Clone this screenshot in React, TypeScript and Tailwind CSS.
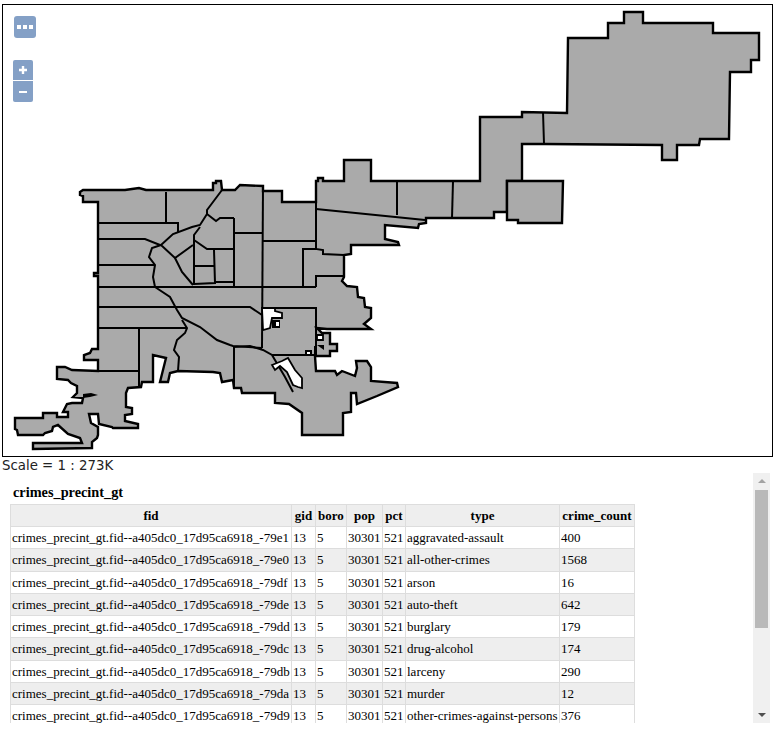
const outline =
  "80,192 83,190 125,190 132,189 139,188 146,190 213,190 213,183 216,183 216,181 221,181 222,190 235,190 240,185 263,186 263,191 282,191 282,202 316,202 316,181 318,181 318,178 323,178 323,181 344,181 344,160 371,160 371,181 480,181 480,117 513,117 522,117 522,112 567,113 568,38 608,38 608,23 624,23 624,12 643,12 643,23 713,23 713,33 759,33 759,60 751,60 751,72 730,72 729,139 700,139 699,145 677,145 677,160 662,160 662,145 545,144 522,144 522,181 507,181 507,212 494,212 494,218 426,218 426,223 419,224 418,228 385,225 385,239 398,242 399,245 351,245 351,254 344,255 344,277 342,281 347,286 357,287 358,297 364,298 365,307 371,308 371,318 364,324 371,329 356,329 327,329 317,328 322,333 330,333 330,344 337,344 337,351 330,351 330,356 315,356 316,371 335,371 337,375 342,371 355,376 357,368 356,361 367,361 371,367 371,381 397,383 398,387 377,396 357,404 356,393 351,393 351,412 343,413 343,435 302,435 302,413 289,404 275,403 275,393 242,393 241,388 234,388 233,380 222,382 220,373 213,372 178,371 170,373 168,382 160,382 166,358 153,355 153,382 142,382 141,387 128,388 126,393 126,407 132,408 132,414 125,415 125,421 138,424 138,428 113,428 112,427 99,424 98,414 89,414 91,423 98,427 98,435 97,438 92,442 92,448 33,449 33,443 82,443 80,438 68,434 58,425 53,427 52,431 45,433 43,435 18,435 17,430 15,429 15,418 43,418 43,413 57,413 57,417 68,417 68,412 63,412 67,404 72,403 82,403 83,398 73,397 77,393 77,386 71,383 68,380 57,379 57,367 65,367 72,370 98,371 98,360 84,360 84,355 90,353 92,349 98,349 98,276 94,276 94,273 98,273 98,202 83,202 83,196 80,195";

const eastBlock = "507,181 563,181 562,223 518,223 518,220 507,220";

const holes = [
  "262,308 275,308 275,311 282,313 282,318 272,318 270,328 263,330",
  "272,365 282,361 288,358 295,370 302,378 302,388 298,387 293,385 287,372 280,366 275,370",
  "317,335 323,335 323,340 317,340",
];

const slivers = [
  "83,394 91,393 98,395 90,397 83,398",
  "272,320 280,320 280,328 272,328",
  "305,350 312,350 312,355 305,355",
  "317,345 324,345 324,350",
  "314,346 317,346 317,356 314,356",
];

// small white gaps inside the black specks south of the first hole
const specks = ["276,322 279,322 279,326 276,326", "307,352 310,352 310,354 307,354"];

const precinctLines = [
  "98,223 178,223 178,233",
  "166,192 166,223",
  "98,239 145,239 160,245",
  "222,190 213,202 207,210 207,214 200,225 192,227 173,234 161,245 175,258 193,245",
  "207,214 216,221 220,218 234,218",
  "200,227 194,235 194,240 207,249 234,249",
  "194,240 194,285",
  "194,266 214,266",
  "214,250 215,283 194,284",
  "215,282 234,282",
  "234,218 234,287",
  "234,233 262,233",
  "161,245 152,248 149,257 155,265 153,277 155,287 170,297 177,310 182,318 200,327 217,340 230,345 233,346 262,348",
  "175,258 182,272 193,285",
  "98,265 155,265",
  "98,287 316,287",
  "98,307 250,307 262,315",
  "263,186 262,348",
  "263,241 316,241",
  "316,181 316,249 323,250 323,254 344,255",
  "316,209 425,220",
  "397,181 397,215",
  "453,181 452,218",
  "543,112 544,144",
  "303,287 303,249 316,249",
  "316,287 316,276 343,276",
  "262,308 316,308 316,327",
  "316,327 316,347",
  "272,355 315,355",
  "233,347 250,346 263,350 272,355 285,377 293,392",
  "234,347 234,387",
  "182,320 187,328 185,333 177,340 174,350 179,357 178,371",
  "98,328 187,328",
  "139,329 139,387",
  "98,371 139,371",
];

const rows = [
  ["79e1", "aggravated-assault", "400"],
  ["79e0", "all-other-crimes", "1568"],
  ["79df", "arson", "16"],
  ["79de", "auto-theft", "642"],
  ["79dd", "burglary", "179"],
  ["79dc", "drug-alcohol", "174"],
  ["79db", "larceny", "290"],
  ["79da", "murder", "12"],
  ["79d9", "other-crimes-against-persons", "376"],
];

const MapView = () => (
  <div className="relative w-[771px] h-[453px] border border-black bg-white">
    <svg viewBox="3 5 769 451" className="block w-[769px] h-[451px]">
      <polygon points={outline} fill="#aaaaaa" stroke="#000" strokeWidth="2.4" />
      <polygon points={eastBlock} fill="#aaaaaa" stroke="#000" strokeWidth="2.4" />
      {precinctLines.map((line, index) => (
        <polyline key={index} points={line} fill="none" stroke="#000" strokeWidth="2" />
      ))}
      {holes.map((hole, index) => (
        <polygon key={index} points={hole} fill="#fff" stroke="#000" strokeWidth="1.8" />
      ))}
      {slivers.map((sliver, index) => (
        <polygon key={index} points={sliver} fill="#000" />
      ))}
      {specks.map((speck, index) => (
        <polygon key={index} points={speck} fill="#fff" />
      ))}
    </svg>

    {/* map controls */}
    <button className="absolute left-[11px] top-[11px] w-[22px] h-[22px] rounded-[3px] bg-[#84a0c6] flex items-center justify-center gap-[2px]">
      <span className="w-[4px] h-[4px] bg-white" />
      <span className="w-[4px] h-[4px] bg-white" />
      <span className="w-[4px] h-[4px] bg-white" />
    </button>
    <div className="absolute left-[10px] top-[55px] w-[20px] flex flex-col gap-[1px]">
      <button className="h-[20px] rounded-t-[2px] bg-[#84a0c6] flex items-center justify-center">
        <svg width="10" height="10" viewBox="0 0 10 10">
          <path d="M5 1v8M1 5h8" stroke="#fff" strokeWidth="2.4" />
        </svg>
      </button>
      <button className="h-[21px] rounded-b-[2px] bg-[#84a0c6] flex items-center justify-center">
        <svg width="10" height="10" viewBox="0 0 10 10">
          <path d="M1 5h8" stroke="#fff" strokeWidth="2" />
        </svg>
      </button>
    </div>
  </div>
);

const headCell = "border border-[#dddddd] bg-[#eeeeee] font-bold text-center px-[1px] h-[22px]";
const bodyCell = "border border-[#dddddd] px-[1px] h-[22.25px] font-normal text-left";

export default function App() {
  return (
    <div className="w-[777px] h-[736px] overflow-hidden bg-white pl-[2px] pt-[4px] text-black">
      <MapView />
      <div className="font-['DejaVu_Sans',sans-serif] text-[13.33px] leading-[15px] pt-[1px] text-[#222222]">
        Scale = 1 : 273K
      </div>
      <div className="flex h-[250px] font-['Liberation_Serif',serif] text-[13px] leading-[15px]">
        <div className="w-[751px] overflow-hidden pl-[8px]">
          <div className="font-bold text-[14.3px] leading-[16px] pt-[11px] pb-[4px] pl-[3px]">
            crimes_precint_gt
          </div>
          <table className="border-collapse table-fixed w-[625px] whitespace-nowrap">
            <thead>
              <tr>
                <th className={`${headCell} w-[281px]`}>fid</th>
                <th className={`${headCell} w-[24px]`}>gid</th>
                <th className={`${headCell} w-[31px]`}>boro</th>
                <th className={`${headCell} w-[36px]`}>pop</th>
                <th className={`${headCell} w-[23px]`}>pct</th>
                <th className={`${headCell} w-[154px]`}>type</th>
                <th className={`${headCell} w-[75px]`}>crime_count</th>
              </tr>
            </thead>
            <tbody>
              {rows.map((row, index) => (
                <tr key={row[0]} className={index % 2 === 1 ? "bg-[#eeeeee]" : "bg-white"}>
                  <td className={bodyCell}>crimes_precint_gt.fid--a405dc0_17d95ca6918_-{row[0]}</td>
                  <td className={bodyCell}>13</td>
                  <td className={bodyCell}>5</td>
                  <td className={bodyCell}>30301</td>
                  <td className={bodyCell}>521</td>
                  <td className={bodyCell}>{row[1]}</td>
                  <td className={bodyCell}>{row[2]}</td>
                </tr>
              ))}
            </tbody>
          </table>
        </div>
        {/* scrollbar */}
        <div className="w-[17px] bg-[#f0f0f0] flex flex-col items-center pt-[6px] pb-[6px]">
          <div className="w-0 h-0 border-x-[4px] border-x-transparent border-b-[4px] border-b-[#a3a3a3]" />
          <div className="w-[13px] h-[138px] bg-[#b9b9b9] mt-[7px]" />
          <div className="w-0 h-0 border-x-[4px] border-x-transparent border-t-[4px] border-t-[#505050] mt-auto" />
        </div>
      </div>
    </div>
  );
}
